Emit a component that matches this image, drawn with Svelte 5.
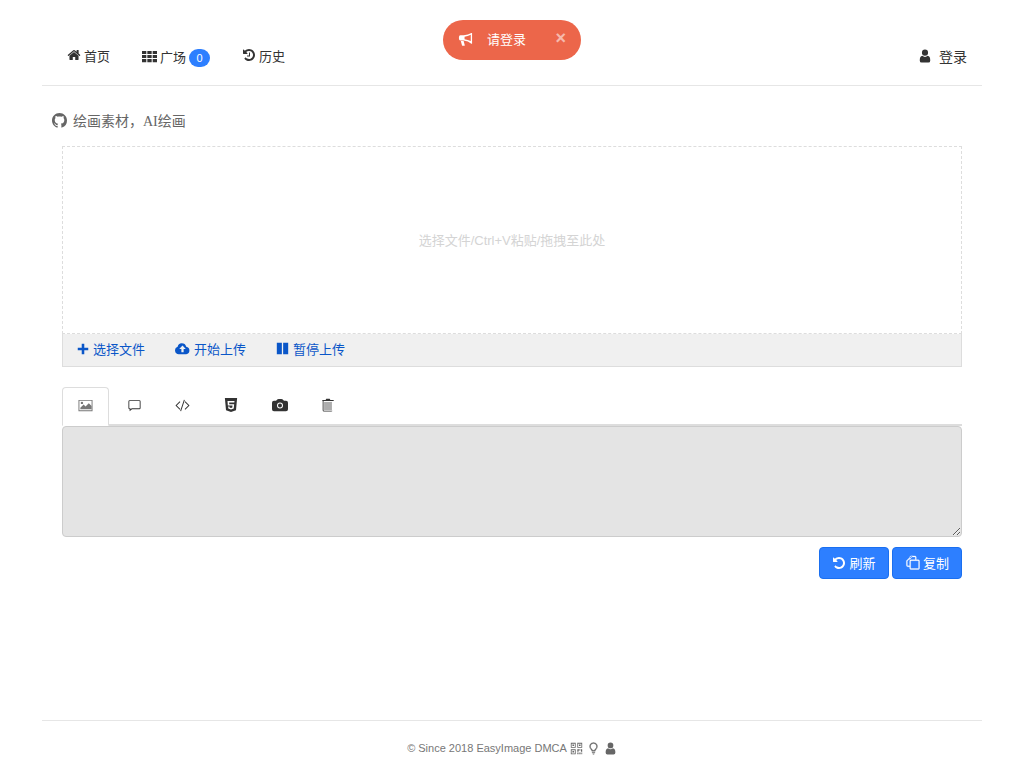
<script>
  const navItems = [
    { icon: 'home', size: 14, label: '首页' },
    { icon: 'th', size: 15, label: '广场', badge: 0 },
    { icon: 'history', size: 14, label: '历史' }
  ];
  const tools = [
    { icon: 'plus', size: 12, label: '选择文件' },
    { icon: 'cloud', size: 15, label: '开始上传' },
    { icon: 'pause', size: 13, label: '暂停上传' }
  ];
  const tabs = [
    { icon: 'image', size: 15 },
    { icon: 'chat', size: 13 },
    { icon: 'code', size: 15 },
    { icon: 'html5', size: 14 },
    { icon: 'camera', size: 16 },
    { icon: 'trash', size: 14 }
  ];
</script>

{#snippet icon(name, size)}
  <svg class="icon" width={size} height={size} viewBox="0 0 16 16" fill="currentColor" aria-hidden="true">
    {#if name === 'home'}
      <path d="M13.2 8.900v4.300q0 .5-.5.5H9.400v-3.400H6.600v3.400H3.300q-.5 0-.5-.5V8.900L8 4.600zM15.200 8.300l-.6.7q-.2.2-.4 0L8 3.800 1.800 9q-.2.2-.4 0l-.6-.7q-.2-.2 0-.4l6.400-5.300q.8-.6 1.600 0l2.200 1.800V2.700q0-.3.300-.3h1.700q.3 0 .3.300v3.600l1.900 1.600q.2.200 0 .4z" />
    {:else if name === 'th'}
      <path d="M0 2h4.600v3.300H0zM5.700 2h4.600v3.300H5.700zM11.400 2H16v3.300h-4.600zM0 6.350h4.600v3.300H0zM5.700 6.350h4.600v3.300H5.700zM11.400 6.350H16v3.300h-4.600zM0 10.700h4.600V14H0zM5.700 10.700h4.600V14H5.700zM11.400 10.700H16V14h-4.600z" />
    {:else if name === 'history'}
      <path transform="scale(0.00893)" d="M1664 896q0 156-61 298t-164 245-245 164-298 61q-172 0-327-72.500t-264-204.500q-7-10-6.500-22.500t8.500-20.500l137-138q10-9 25-9 16 2 23 12 73 95 179 147t225 52q104 0 198.500-40.500t163.500-109.500 109.500-163.500 40.500-198.500-40.500-198.500-109.500-163.500-163.500-109.500-198.500-40.500q-98 0-188 35.500t-160 101.500l137 138q31 30 14 69-17 40-59 40h-448q-26 0-45-19t-19-45v-448q0-42 40-59 39-17 69 14l130 129q107-101 244.500-156.500t284.500-55.500q156 0 298 61t245 164 164 245 61 298zm-640-288v448q0 14-9 23t-23 9h-320q-14 0-23-9t-9-23v-64q0-14 9-23t23-9h224v-352q0-14 9-23t23-9h64q14 0 23 9t9 23z" />
    {:else if name === 'user'}
      <path d="M14 13q0 2.500-2.200 2.500H4.200Q2 15.500 2 13q0-4.800 3-5.200 1.200 1.200 3 1.200t3-1.200q3 .4 3 5.200zM11.500 4.200a3.500 3.500 0 1 1-7 0 3.500 3.500 0 0 1 7 0z" />
    {:else if name === 'github'}
      <path d="M8 0C3.580 0 0 3.580 0 8c0 3.540 2.290 6.530 5.470 7.590.4.070.55-.17.55-.38 0-.19-.01-.82-.01-1.490-2.010.37-2.530-.49-2.690-.94-.09-.23-.48-.94-.82-1.130-.28-.15-.68-.52-.01-.53.63-.01 1.080.58 1.230.82.72 1.210 1.870.87 2.330.66.070-.52.28-.87.51-1.070-1.780-.2-3.640-.89-3.640-3.950 0-.87.31-1.590.82-2.150-.08-.2-.36-1.020.08-2.120 0 0 .67-.21 2.200.82.64-.18 1.320-.27 2-.27.68 0 1.360.09 2 .27 1.530-1.040 2.200-.82 2.200-.82.44 1.100.16 1.920.08 2.120.51.56.82 1.270.82 2.150 0 3.070-1.870 3.750-3.650 3.950.29.25.54.73.54 1.480 0 1.070-.01 1.930-.01 2.200 0 .21.15.46.55.38A8.013 8.013 0 0016 8c0-4.420-3.580-8-8-8z" />
    {:else if name === 'bullhorn'}
      <path d="M15 1v11.500h-.8Q11 9.500 6 9H2.500Q1 9 1 7V5.500Q1 3.500 2.500 3.500H6q5-.5 8.200-2.500zM13.600 3Q10.500 4.600 7 5v2.600q3.500.4 6.600 2z" fill-rule="evenodd" />
      <path d="M3 9.500h3l1.200 4.500q-.1.600-.7.700H5q-.6 0-.8-.6z" />
    {:else if name === 'plus'}
      <path d="M6.300 1h3.400v5.300H15v3.400H9.700V15H6.300V9.700H1V6.300h5.300z" />
    {:else if name === 'cloud'}
      <path fill-rule="evenodd" d="M4 14a4 4 0 0 1-1.200-7.800A4.700 4.700 0 0 1 7 2.500a5 5 0 0 1 5 3.600 4 4 0 0 1 0 7.900zM8 4.800 4.500 8.600h2.300V12h2.400V8.600h2.300z" />
    {:else if name === 'pause'}
      <path d="M1 1h6.200v14H1zM8.800 1H15v14H8.800z" />
    {:else if name === 'image'}
      <path fill-rule="evenodd" d="M.5 2h15v12H.5zM1.500 3v10h13V3z" />
      <path d="M2.500 12V10.500L6 7l2 2 3.500-3.500 3 3V12zM5.500 5.200a1.300 1.300 0 1 1-2.600 0 1.300 1.300 0 0 1 2.600 0z" />
    {:else if name === 'chat'}
      <path fill-rule="evenodd" d="M2 1.500h12A1.500 1.500 0 0 1 15.500 3v8a1.500 1.500 0 0 1-1.500 1.500H5L2 15v-2.500A1.500 1.500 0 0 1 .5 11V3A1.500 1.500 0 0 1 2 1.500zM2 2.600a.4.4 0 0 0-.4.4v8a.4.4 0 0 0 .4.4h1.100v1.200l1.500-1.200H14a.4.4 0 0 0 .4-.4V3a.4.4 0 0 0-.4-.4z" />
    {:else if name === 'code'}
      <path d="M5 3.500l.7.7L1.900 8l3.800 3.800-.7.7L.5 8zM11 3.500l-.7.700L14.100 8l-3.800 3.800.7.700L15.500 8zM9.500 1.800l1 .3-4 12.100-1-.3z" />
    {:else if name === 'html5'}
      <path fill-rule="evenodd" d="M1 0h14l-1.300 14L8 16l-5.700-2zM4 3.300l.4 5.200h5.300l-.2 2.300L8 11.300l-1.600-.5-.1-1.200H4.700l.2 2.500L8 13l3.100-1 .5-5H6l-.1-1.800h5.900l.2-1.900z" />
    {:else if name === 'camera'}
      <path d="M10 8.500a2 2 0 1 1-4 0 2 2 0 0 1 4 0z" />
      <path fill-rule="evenodd" d="M2 3.800a2 2 0 0 0-2 2v6.400a2 2 0 0 0 2 2h12a2 2 0 0 0 2-2V5.800a2 2 0 0 0-2-2h-1.172a2 2 0 0 1-1.414-.586l-.628-.628A2 2 0 0 0 9.372 2H6.628a2 2 0 0 0-1.414.586l-.628.628A2 2 0 0 1 3.172 3.800H2zm9 4.700a3 3 0 1 1-6 0 3 3 0 0 1 6 0z" />
    {:else if name === 'trash'}
      <path d="M3.500 4.500h9v10h-9z" opacity="0.4" />
      <path fill-rule="evenodd" d="M6 .8h4l.7 1.400h3.800v1.100h-1.400v10.700q0 1.500-1.500 1.500H3.400q-1.500 0-1.500-1.500V3.300H1.500V2.200h3.800zM2.900 3.300v10.700q0 .9.900.9h8.400q.9 0 .9-.9V3.300z" />
    {:else if name === 'refresh'}
      <path transform="scale(0.00893)" d="M1664 896q0 156-61 298t-164 245-245 164-298 61q-172 0-327-72.500t-264-204.500q-7-10-6.500-22.500t8.500-20.500l137-138q10-9 25-9 16 2 23 12 73 95 179 147t225 52q104 0 198.500-40.500t163.500-109.500 109.500-163.500 40.500-198.500-40.500-198.500-109.500-163.500-163.500-109.500-198.500-40.500q-98 0-188 35.500t-160 101.500l137 138q31 30 14 69-17 40-59 40h-448q-26 0-45-19t-19-45v-448q0-42 40-59 39-17 69 14l130 129q107-101 244.500-156.500t284.500-55.500q156 0 298 61t245 164 164 245 61 298z" />
    {:else if name === 'copy'}
      <path fill-rule="evenodd" stroke="currentColor" stroke-width="0.3" d="M5 5V2.500A1.500 1.500 0 0 1 6.500 1h1l.7 0L5 5zM6.500 1l-5 5V11a1.500 1.500 0 0 0 1.500 1.500h2V14a1.500 1.500 0 0 0 1.500 1.500H14a1.500 1.500 0 0 0 1.500-1.500V6.500A1.500 1.500 0 0 0 14 5h-2V2.500A1.500 1.500 0 0 0 10.500 1zM7 2h3.500a.5.500 0 0 1 .5.500V5H6.500A1.500 1.500 0 0 0 5 6.500v5H3a.5.500 0 0 1-.5-.5V6.500zM6.500 6H14a.5.500 0 0 1 .5.500V14a.5.500 0 0 1-.5.500H6.500A.5.500 0 0 1 6 14V6.500a.5.500 0 0 1 .5-.5z" />
    {:else if name === 'qr'}
      <path fill-rule="evenodd" d="M1 1h6v6H1zM2 2v4h4V2zM9 1h6v6H9zM10 2v4h4V2zM1 9h6v6H1zM2 10v4h4v-4zM3 3h2v2H3zM11 3h2v2h-2zM3 11h2v2H3zM9 9h3v1.500h-1.500V12H9zM13 9h2v3h-1.500v-1.500H13zM9 13h1.500v2H9zM11.500 13H13v2h-1.500zM14 13h1v2h-1z" />
    {:else if name === 'bulb'}
      <path fill-rule="evenodd" stroke="currentColor" stroke-width="0.4" d="M8 .5a5 5 0 0 1 3.200 8.800c-.5.500-1 1.200-1.200 2.200H6c-.2-1-.7-1.700-1.200-2.200A5 5 0 0 1 8 .5zM8 1.700a3.800 3.800 0 0 0-2.400 6.700c.6.500 1.100 1.100 1.400 1.900h2c.3-.8.800-1.400 1.400-1.900A3.800 3.800 0 0 0 8 1.700z" />
      <path d="M6 12.300h4v1H6zM6.500 14h3l-.8 1.500H7.300z" />
    {/if}
  </svg>
{/snippet}

<div class="toast">
  <span class="toast-icon">{@render icon('bullhorn', 15)}</span>
  <span class="toast-text">请登录</span>
  <span class="toast-close">×</span>
</div>

<div class="page">
  <nav class="navbar">
    <ul class="nav-list">
      {#each navItems as item}
        <li>
          <a href="#top">
            {@render icon(item.icon, item.size)}
            <span>{item.label}</span>
            {#if item.badge !== undefined}<span class="badge">{item.badge}</span>{/if}
          </a>
        </li>
      {/each}
    </ul>
    <a class="login" href="#top">{@render icon('user', 14)}<span>登录</span></a>
  </nav>

  <div class="subtitle">
    {@render icon('github', 15)}
    <span>绘画素材，AI绘画</span>
  </div>

  <main class="content">
    <section class="uploader">
      <div class="dropzone">选择文件/Ctrl+V粘贴/拖拽至此处</div>
      <div class="toolbar">
        {#each tools as tool}
          <a href="#top">{@render icon(tool.icon, tool.size)}<span>{tool.label}</span></a>
        {/each}
      </div>
    </section>

    <div class="tabs">
      {#each tabs as tab, i}
        <button class="tab" class:active={i === 0}>{@render icon(tab.icon, tab.size)}</button>
      {/each}
    </div>
    <textarea class="output" disabled></textarea>

    <div class="actions">
      <button class="btn">{@render icon('refresh', 14)}<span>刷新</span></button>
      <button class="btn">{@render icon('copy', 15)}<span>复制</span></button>
    </div>
  </main>

  <footer class="footer">
    <span>© Since 2018 EasyImage DMCA</span>
    <span class="footer-icons">
      {@render icon('qr', 13)}
      {@render icon('bulb', 13)}
      {@render icon('user', 13)}
    </span>
  </footer>
</div>

<style>
  :global(body) {
    font-family: "Liberation Sans", "Noto Sans CJK SC", sans-serif;
    font-size: 13px;
    color: #333;
    background: #fff;
  }

  a {
    color: inherit;
    text-decoration: none;
  }

  .icon {
    flex: none;
  }

  .page {
    width: 940px;
    margin: 0 auto;
    min-height: 768px;
    display: flex;
    flex-direction: column;
  }

  .toast {
    position: fixed;
    top: 20px;
    left: 443px;
    width: 138px;
    height: 40px;
    box-sizing: border-box;
    padding-left: 15px;
    display: flex;
    align-items: center;
    border-radius: 20px;
    background: #ec664a;
    color: #fff;
  }

  .toast-icon {
    display: flex;
    width: 29px;
    margin-top: -2px;
  }

  .toast-text {
    padding-bottom: 3px;
  }

  .toast-close {
    position: absolute;
    right: 15px;
    top: 7px;
    font-size: 18px;
    font-weight: bold;
    line-height: 22px;
    opacity: 0.55;
  }

  .navbar {
    display: flex;
    justify-content: space-between;
    align-items: center;
    box-sizing: border-box;
    height: 86px;
    padding: 27px 15px 0 25px;
    border-bottom: 1px solid #e6e6e6;
  }

  .nav-list {
    display: flex;
    gap: 32px;
    margin: 0;
    padding: 0;
    list-style: none;
  }

  .nav-list a {
    display: flex;
    align-items: center;
    gap: 3px;
  }

  .badge {
    width: 21px;
    height: 18px;
    margin-top: 3px;
    border-radius: 9px;
    background: #2d7fff;
    color: #fff;
    font-size: 11px;
    line-height: 18px;
    text-align: center;
  }

  .login {
    display: flex;
    align-items: center;
    gap: 7px;
    font-size: 14px;
  }

  .subtitle {
    display: flex;
    align-items: center;
    gap: 6px;
    height: 20px;
    margin: 24px 0 0 10px;
    color: #666;
    font-family: "Liberation Serif", "Noto Sans CJK SC", serif;
    font-size: 14px;
  }

  .content {
    padding: 16px 20px 0;
  }

  .dropzone {
    box-sizing: border-box;
    height: 188px;
    padding-bottom: 2px;
    display: flex;
    align-items: center;
    justify-content: center;
    border: 1px dashed #ddd;
    color: #d4d4d4;
    font-size: 13px;
  }

  .toolbar {
    display: flex;
    gap: 30px;
    box-sizing: border-box;
    height: 33px;
    padding: 0 0 3px 14px;
    align-items: center;
    border: 1px solid #ddd;
    border-top: none;
    background: #f0f0f0;
    color: #0a56c8;
  }

  .toolbar a {
    display: flex;
    align-items: center;
    gap: 4px;
  }

  .tabs {
    display: flex;
    height: 37px;
    margin-top: 20px;
    border-bottom: 2px solid #ddd;
  }

  .tab {
    width: 47px;
    height: 39px;
    margin-right: 1.5px;
    padding: 0;
    border: 1px solid transparent;
    border-radius: 4px 4px 0 0;
    background: none;
    color: #333;
  }

  .tab.active {
    border-color: #ddd #ddd #fff;
    background: #fff;
    color: #777;
  }

  .output {
    display: block;
    box-sizing: border-box;
    width: 100%;
    height: 111px;
    border: 1px solid #ccc;
    border-radius: 4px;
    background: #e4e4e4;
  }

  .actions {
    display: flex;
    justify-content: flex-end;
    gap: 3px;
    margin-top: 10px;
  }

  .btn {
    display: flex;
    align-items: center;
    justify-content: center;
    gap: 3px;
    width: 70px;
    height: 32px;
    padding: 0 0 1px;
    border: 1px solid #1a6ff0;
    border-radius: 4px;
    background: #2d7fff;
    color: #fff;
    font: inherit;
  }

  .footer {
    margin-top: auto;
    height: 48px;
    box-sizing: border-box;
    display: flex;
    align-items: center;
    justify-content: center;
    gap: 3px;
    border-top: 1px solid #e6e6e6;
    color: #777;
    font-size: 11px;
    padding-top: 7px;
  }

  .footer-icons {
    display: flex;
    gap: 4px;
    color: #666;
  }
</style>
